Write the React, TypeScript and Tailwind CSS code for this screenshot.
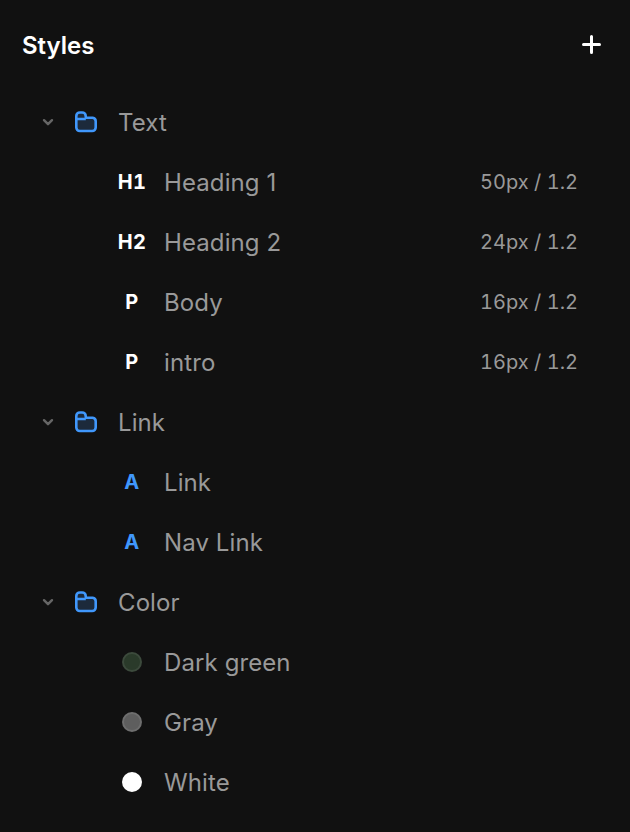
const font = { fontFamily: "Inter, 'Liberation Sans', sans-serif" };

function Chevron() {
  return (
    <svg width="24" height="24" viewBox="0 0 24 24" fill="none" className="shrink-0">
      <path d="M8 10.2l4 4 4-4" stroke="#666666" strokeWidth="2.4" strokeLinecap="round" strokeLinejoin="round" />
    </svg>
  );
}

function Folder() {
  return (
    <svg width="24" height="24" viewBox="0 0 24 24" fill="none" className="shrink-0">
      <path d="M2.5 6a3 3 0 0 1 3-3h3a3 3 0 0 1 3 3v1.5h7a3 3 0 0 1 3 3v7a3 3 0 0 1-3 3h-13a3 3 0 0 1-3-3z" fill="#1c2a3b" />
      <path
        d="M2.3 17.5V6a3.5 3.5 0 0 1 3.5-3.5h2.4a3.5 3.5 0 0 1 3.5 3.5v0.2a1.6 1.6 0 0 0 1.6 1.6h5.4a3.5 3.5 0 0 1 3 3.4v6.3a3.5 3.5 0 0 1-3.5 3.5H5.8a3.5 3.5 0 0 1-3.5-3.5zM2.3 9h9.5"
        stroke="#4097fb"
        strokeWidth="2.6"
        strokeLinejoin="round"
      />
    </svg>
  );
}

function GroupRow({ label }: { label: string }) {
  return (
    <div className="flex h-[60px] items-center pl-9">
      <Chevron />
      <div className="ml-[14px]"><Folder /></div>
      <span className="ml-5 mt-0.5 text-2xl tracking-[0.1px] text-[#999999]">{label}</span>
    </div>
  );
}

function ItemRow({ icon, label, size }: { icon: React.ReactNode; label: string; size?: string }) {
  return (
    <div className="flex h-[60px] items-center pl-[110px] pr-[52px]">
      <div className="mr-px flex w-11 shrink-0 items-center justify-center">{icon}</div>
      <span className="ml-[9px] mt-0.5 text-2xl tracking-[0.1px] text-[#999999]">{label}</span>
      {size && <span className="ml-auto text-xl text-[#999999] tabular-nums">{size}</span>}
    </div>
  );
}

function Tag({ children, blue }: { children: string; blue?: boolean }) {
  return <span className={`text-xl font-bold tracking-[0.4px] tabular-nums ${blue ? "text-[#4097fb]" : "text-white"}`}>{children}</span>;
}

function Swatch({ color, border }: { color: string; border: string }) {
  return <span className={`size-5 rounded-full border-2 ${color} ${border}`} />;
}

export default function App() {
  return (
    <div className="h-[832px] w-[630px] overflow-hidden bg-[#111111] antialiased" style={font}>
      <header className="flex h-[92px] items-center justify-between pl-[22px] pr-[26px]">
        <h1 className="text-2xl font-semibold text-white">Styles</h1>
        <svg width="24" height="24" viewBox="0 0 24 24" fill="none">
          <path d="M11.5 2.5v16M3.5 10.5h16" stroke="#fff" strokeWidth="3" strokeLinecap="round" />
        </svg>
      </header>
      <GroupRow label="Text" />
      <ItemRow icon={<Tag>H1</Tag>} label="Heading 1" size="50px / 1.2" />
      <ItemRow icon={<Tag>H2</Tag>} label="Heading 2" size="24px / 1.2" />
      <ItemRow icon={<Tag>P</Tag>} label="Body" size="16px / 1.2" />
      <ItemRow icon={<Tag>P</Tag>} label="intro" size="16px / 1.2" />
      <GroupRow label="Link" />
      <ItemRow icon={<Tag blue>A</Tag>} label="Link" />
      <ItemRow icon={<Tag blue>A</Tag>} label="Nav Link" />
      <GroupRow label="Color" />
      <ItemRow icon={<Swatch color="bg-[#2a3a2a]" border="border-[#3c4a3c]" />} label="Dark green" />
      <ItemRow icon={<Swatch color="bg-[#5e5e5e]" border="border-[#6e6e6e]" />} label="Gray" />
      <ItemRow icon={<Swatch color="bg-white" border="border-white" />} label="White" />
    </div>
  );
}
